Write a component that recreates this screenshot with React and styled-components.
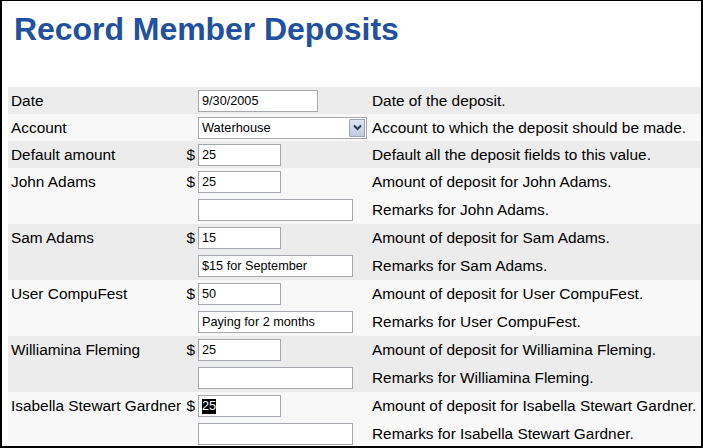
import React from "react";
import styled, { createGlobalStyle } from "styled-components";

const GlobalStyle = createGlobalStyle`
  html, body {
    margin: 0;
    padding: 0;
    background: #ffffff;
  }
  * { box-sizing: border-box; }`

const Frame = styled.div`
  width: 703px;
  height: 448px;
  background: #ffffff;
  border: 2px solid #000;
  border-top-width: 1px;
  overflow: hidden;
  font-family: "Liberation Sans", Arial, sans-serif;
  color: #000;`

const Header = styled.div`
  height: 86px;
  padding: 10px 0 0 12px;`

const Title = styled.h1`
  margin: 0;
  font-size: 32px;
  font-weight: bold;
  color: #2150a0;
  line-height: 37px;
  letter-spacing: -0.05px;`

const Table = styled.div`
  margin-left: 6px;
  display: flex;
  flex-direction: column;`

const Row = styled.div`
  display: grid;
  grid-template-columns: 176px 14px 174px 1fr;
  align-items: center;
  height: ${({ $h }) => $h}px;
  background: ${({ $dark }) => ($dark ? "#ececec" : "#f8f8f8")};
  font-size: 15.4px;
  white-space: nowrap;`

const Label = styled.span`
  padding-left: 3px;`

const Dollar = styled.span`
  text-align: right;
  padding-right: 3px;`

const Desc = styled.span`
  padding-left: 0;`

const TextBox = styled.input`
  width: ${({ $w }) => $w}px;
  height: 22px;
  border: 1px solid #a5a9ad;
  background: #fff;
  padding: 0 3px;
  font-family: "Liberation Sans", Arial, sans-serif;
  font-size: 12.7px;
  color: #000;
  outline: none;`

const FakeBox = styled.div`
  width: ${({ $w }) => $w}px;
  height: 22px;
  border: 1px solid #a5a9ad;
  background: #fff;
  padding: 0 3px;
  display: flex;
  align-items: center;
  font-size: 12.7px;`

const Selected = styled.span`
  background: #000;
  color: #fff;
  line-height: 15px;`

const SelectWrap = styled.div`
  position: relative;
  width: 169px;
  height: 22px;
  border: 1px solid #a5a9ad;
  background: #fff;`

const Select = styled.select`
  appearance: none;
  width: 100%;
  height: 100%;
  border: none;
  background: transparent;
  padding: 0 0 0 3px;
  font-family: "Liberation Sans", Arial, sans-serif;
  font-size: 12.8px;
  color: #000;
  outline: none;`

const ArrowButton = styled.span`
  position: absolute;
  top: 1px;
  right: 1px;
  width: 16px;
  height: 18px;
  border: 1px solid #9aa6bd;
  border-radius: 1px;
  background: linear-gradient(#dfe5f1, #c2cce0);
  display: flex;
  align-items: center;
  justify-content: center;
  pointer-events: none;`

const members = [
  { name: "John Adams", amount: "25", remark: "" },
  { name: "Sam Adams", amount: "15", remark: "$15 for September" },
  { name: "User CompuFest", amount: "50", remark: "Paying for 2 months" },
  { name: "Williamina Fleming", amount: "25", remark: "" },
  { name: "Isabella Stewart Gardner", amount: "25", remark: "", selected: true },
];

function App() {
  return (
    <Frame>
      <GlobalStyle />
      <Header>
        <Title>Record Member Deposits</Title>
      </Header>
      <Table>
        <Row $h={27} $dark>
          <Label>Date</Label>
          <span />
          <TextBox $w={120} defaultValue="9/30/2005" />
          <Desc>Date of the deposit.</Desc>
        </Row>
        <Row $h={27}>
          <Label>Account</Label>
          <span />
          <SelectWrap>
            <Select defaultValue="Waterhouse">
              <option>Waterhouse</option>
            </Select>
            <ArrowButton>
              <svg width="9" height="7" viewBox="0 0 9 7">
                <path d="M1 1.5 L4.5 5 L8 1.5" fill="none" stroke="#2b3550" strokeWidth="2" />
              </svg>
            </ArrowButton>
          </SelectWrap>
          <Desc>Account to which the deposit should be made.</Desc>
        </Row>
        <Row $h={27} $dark>
          <Label>Default amount</Label>
          <Dollar>$</Dollar>
          <TextBox $w={83} defaultValue="25" />
          <Desc>Default all the deposit fields to this value.</Desc>
        </Row>
        {members.map((m, i) => (
          <React.Fragment key={m.name}>
            <Row $h={28} $dark={i % 2 === 1}>
              <Label>{m.name}</Label>
              <Dollar>$</Dollar>
              {m.selected ? (
                <FakeBox $w={83}>
                  <Selected>{m.amount}</Selected>
                </FakeBox>
              ) : (
                <TextBox $w={83} defaultValue={m.amount} />
              )}
              <Desc>Amount of deposit for {m.name}.</Desc>
            </Row>
            <Row $h={28} $dark={i % 2 === 1}>
              <span />
              <span />
              <TextBox $w={155} defaultValue={m.remark} />
              <Desc>Remarks for {m.name}.</Desc>
            </Row>
          </React.Fragment>
        ))}
      </Table>
    </Frame>
  );
}

export default App;
